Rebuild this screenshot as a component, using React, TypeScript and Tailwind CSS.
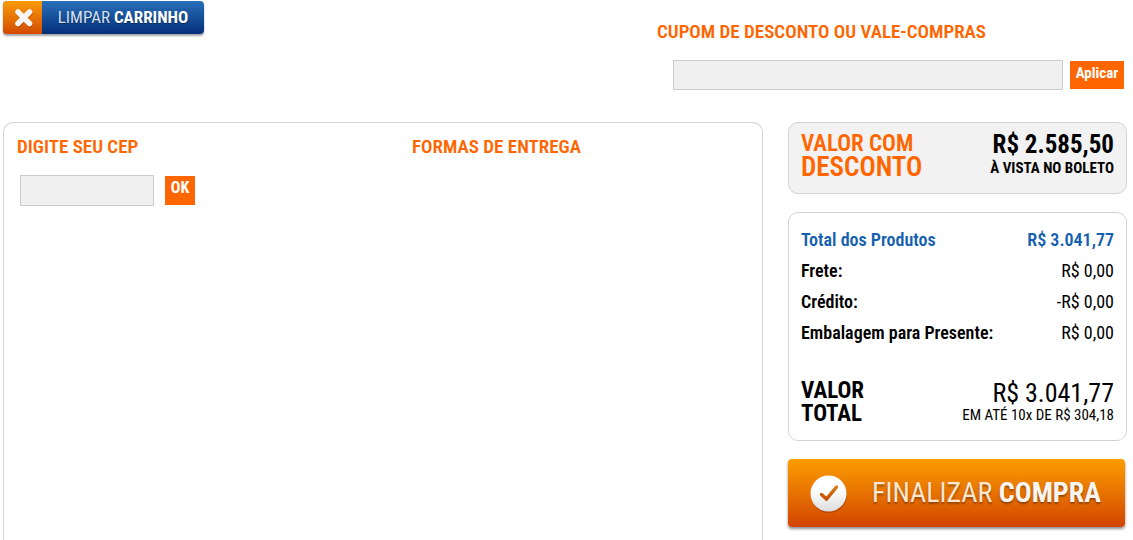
import type { ReactNode } from "react";

function OrangeButton({ children, className }: { children: ReactNode; className: string }) {
  return (
    <button
      type="button"
      className={`flex shrink-0 cursor-pointer justify-center bg-[#ff6600] font-bold text-white ${className}`}
    >
      {children}
    </button>
  );
}

function SummaryRow({ label, value }: { label: string; value: string }) {
  return (
    <div className="flex justify-between text-lg leading-5">
      <dt className="font-semibold">{label}</dt>
      <dd>{value}</dd>
    </div>
  );
}

function ClearCartButton() {
  return (
    <button
      type="button"
      className="flex h-[33px] w-[201px] cursor-pointer items-stretch overflow-hidden rounded-[4px] bg-linear-to-b from-[#2a70bb] to-[#052f78] text-white shadow-[0_2px_2px_rgba(0,0,0,0.35)]"
    >
      <span className="flex w-[39px] items-center justify-center bg-linear-to-b from-[#f99a0a] to-[#d34a02] pl-[3px]">
        <svg viewBox="0 0 20 20" className="size-5" aria-hidden="true">
          <path d="M4.500 5.500 16 17M16 5.500 4.500 17" stroke="#8a3a00" strokeOpacity="0.5" strokeWidth="5" strokeLinecap="round" />
          <path d="M4 4 15.500 15.500M15.500 4 4 15.500" stroke="#f7f5f3" strokeWidth="5.500" strokeLinecap="round" />
        </svg>
      </span>
      <span className="flex flex-1 items-center justify-center text-[17px] text-shadow-[0_1px_1px_rgba(0,0,0,0.4)]">
        <span className="text-[#d3dfee]">LIMPAR</span>&nbsp;<b>CARRINHO</b>
      </span>
    </button>
  );
}

function CheckoutButton() {
  return (
    <button
      type="button"
      className="mt-[18px] mr-[2px] flex h-[68px] cursor-pointer items-center rounded-[4px] bg-linear-to-b from-[#fb9d00] to-[#d14300] pl-[22px] text-white shadow-[0_2px_3px_rgba(0,0,0,0.45)]"
    >
      <svg viewBox="0 0 38 40" className="h-10 w-[38px] shrink-0" aria-hidden="true">
        <defs>
          <linearGradient id="disc" x1="0" y1="0" x2="0" y2="1">
            <stop offset="0.4" stopColor="#ffffff" />
            <stop offset="1" stopColor="#dcdcdc" />
          </linearGradient>
          <linearGradient id="tick" x1="0" y1="0" x2="0" y2="1">
            <stop offset="0" stopColor="#d67a1c" />
            <stop offset="1" stopColor="#c85000" />
          </linearGradient>
        </defs>
        <circle cx="19" cy="22" r="18" fill="#7a2c00" fillOpacity="0.4" />
        <circle cx="18.500" cy="20.500" r="18" fill="url(#disc)" />
        <path d="M11.500 21.500 16.500 26 26.500 14" fill="none" stroke="url(#tick)" strokeWidth="3.500" strokeLinecap="round" />
      </svg>
      <span className="flex-1 text-center text-[28px] leading-9 whitespace-nowrap text-shadow-[0_2px_2px_rgba(0,0,0,0.35)]">
        <span className="text-[#fbe6d2]">FINALIZAR</span> <b className="text-[#f8f4f0]">COMPRA</b>
      </span>
    </button>
  );
}

export default function App() {
  return (
    <main className="flex min-h-screen flex-col bg-white pr-[6px] pl-[3px] font-['Roboto_Condensed','Liberation_Sans_Narrow','Liberation_Sans',sans-serif] text-black">
      <header className="flex items-start justify-between pt-px">
        <ClearCartButton />
        <form className="w-[470px] pt-[19px] pr-[3px]">
          <label htmlFor="coupon" className="block text-[19px] leading-6 font-semibold text-[#ff6600]">
            CUPOM DE DESCONTO OU VALE-COMPRAS
          </label>
          <div className="mt-4 flex items-center gap-[7px] pl-4">
            <input
              id="coupon"
              type="text"
              className="h-[30px] min-w-0 flex-1 border border-[#cccccc] bg-[#f0f0f0] px-2"
            />
            <OrangeButton className="h-7 w-[54px] text-[15px] leading-6">Aplicar</OrangeButton>
          </div>
        </form>
      </header>

      <div className="mt-8 flex flex-1 gap-[25px]">
        <section className="flex flex-1 rounded-t-[10px] border border-b-0 border-[#d3d3d3] px-[13px] pt-3">
          <form className="w-[395px]">
            <label htmlFor="cep" className="block text-[19px] leading-6 font-semibold text-[#ff6600]">
              DIGITE SEU CEP
            </label>
            <div className="mt-4 flex items-center gap-[11px] pl-[3px]">
              <input id="cep" type="text" className="h-[31px] w-[134px] border border-[#cccccc] bg-[#f0f0f0] px-2" />
              <OrangeButton className="h-[29px] w-[30px] text-base leading-6">OK</OrangeButton>
            </div>
          </form>
          <h2 className="text-[19px] leading-6 font-semibold text-[#ff6600]">FORMAS DE ENTREGA</h2>
        </section>

        <aside className="flex w-[339px] flex-col">
          <section className="flex h-[72px] justify-between rounded-[10px] border border-[#d3d3d3] bg-[#f2f2f2] px-3 pt-[10px]">
            <h2 className="font-semibold text-[#ff6600]">
              <span className="block text-[23px] leading-[22px]">VALOR COM</span>
              <span className="block text-[27px] leading-6">DESCONTO</span>
            </h2>
            <p className="text-right font-bold">
              <span className="block text-[25px] leading-6">R$ 2.585,50</span>
              <span className="block text-[15px] leading-[22px]">À VISTA NO BOLETO</span>
            </p>
          </section>

          <section className="mt-[18px] h-[229px] rounded-[10px] border border-[#d3d3d3] px-3 pt-[17px]">
            <dl className="flex flex-col gap-[11px]">
              <div className="flex justify-between text-lg leading-5 font-semibold text-[#1560b0]">
                <dt>Total dos Produtos</dt>
                <dd>R$ 3.041,77</dd>
              </div>
              <SummaryRow label="Frete:" value="R$ 0,00" />
              <SummaryRow label="Crédito:" value="-R$ 0,00" />
              <SummaryRow label="Embalagem para Presente:" value="R$ 0,00" />
            </dl>
            <div className="mt-9 flex justify-between">
              <h2 className="text-[23px] leading-[23px] font-bold">
                VALOR
                <br />
                TOTAL
              </h2>
              <p className="text-right">
                <span className="block text-[26px] leading-7">R$ 3.041,77</span>
                <span className="block text-[15px] leading-4">EM ATÉ 10x DE R$ 304,18</span>
              </p>
            </div>
          </section>

          <CheckoutButton />
        </aside>
      </div>
    </main>
  );
}
